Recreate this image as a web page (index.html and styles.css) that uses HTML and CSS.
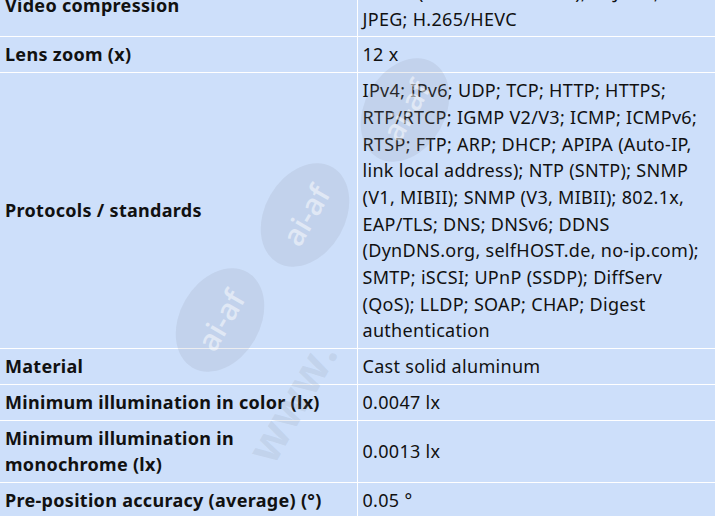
FILE: index.html
```html
<!DOCTYPE html>
<html lang="en">
<head>
    <meta charset="UTF-8">
    <title>Specifications</title>
    <link rel="stylesheet" href="styles.css">
</head>
<body>
    <div class="sheet">
        <table class="spec-table">
            <tr>
                <th>Video compression</th>
                <td>H.264 (ISO/IEC 14496-10); M-JPEG; JPEG;&nbsp;H.265/HEVC</td>
            </tr>
            <tr>
                <th>Lens zoom (x)</th>
                <td>12 x</td>
            </tr>
            <tr>
                <th>Protocols / standards</th>
                <td>IPv4; IPv6; UDP; TCP; HTTP; HTTPS; RTP/RTCP; IGMP V2/V3; ICMP; ICMPv6; RTSP; FTP; ARP; DHCP; APIPA (Auto-IP, link local address); NTP (SNTP); SNMP (V1, MIBII); SNMP (V3, MIBII); 802.1x, EAP/TLS; DNS; DNSv6; DDNS (DynDNS.org, selfHOST.de, no-ip.com); SMTP; iSCSI; UPnP (SSDP); DiffServ (QoS); LLDP; SOAP; CHAP; Digest authentication</td>
            </tr>
            <tr>
                <th>Material</th>
                <td>Cast solid aluminum</td>
            </tr>
            <tr>
                <th>Minimum illumination in color (lx)</th>
                <td>0.0047 lx</td>
            </tr>
            <tr>
                <th>Minimum illumination in monochrome (lx)</th>
                <td>0.0013 lx</td>
            </tr>
            <tr>
                <th>Pre-position accuracy (average) (°)</th>
                <td>0.05 °</td>
            </tr>
        </table>

        <div class="mark mark-top"><span>ai-af</span></div>
        <div class="mark mark-mid"><span>ai-af</span></div>
        <div class="mark mark-low"><span>ai-af</span></div>
        <div class="mark-www">www.</div>
    </div>
</body>
</html>
```

FILE: styles.css
```css
* {
    margin: 0;
    padding: 0;
    box-sizing: border-box;
}

body {
    background: #cddffa;
    font-family: 'Noto Sans', 'Open Sans', sans-serif;
    color: #111;
    overflow: hidden;
}

.sheet {
    position: relative;
    width: 715px;
    height: 516px;
    overflow: hidden;
}

.spec-table {
    width: 715px;
    margin-top: -26px;
    border-collapse: collapse;
    background: #cddffa;
}

.spec-table th,
.spec-table td {
    border: 1px solid #fff;
    padding: 4px 5px;
    font-size: 18px;
    line-height: 26.7px;
    letter-spacing: 0.3px;
    vertical-align: middle;
    text-align: left;
}

.spec-table th {
    width: 357px;
    font-weight: 700;
    border-left: none;
}

.spec-table td {
    font-weight: 400;
    border-right: none;
}

/* watermark */
.mark {
    position: absolute;
    width: 110px;
    height: 80px;
    border-radius: 50%;
    background: rgba(140, 150, 165, 0.17);
    transform: rotate(-60deg);
    display: flex;
    align-items: center;
    justify-content: center;
    pointer-events: none;
}

.mark span {
    font-family: 'Open Sans', sans-serif;
    font-size: 30px;
    font-weight: 600;
    color: rgba(255, 255, 255, 0.5);
}

.mark-top {
    left: 350px;
    top: 70px;
}

.mark-mid {
    left: 250px;
    top: 175px;
}

.mark-low {
    left: 165px;
    top: 280px;
}

.mark-www {
    position: absolute;
    left: 225px;
    top: 370px;
    transform: rotate(-60deg);
    font-family: 'Open Sans', sans-serif;
    font-size: 46px;
    font-weight: 700;
    color: rgba(140, 150, 165, 0.17);
    pointer-events: none;
}
```
